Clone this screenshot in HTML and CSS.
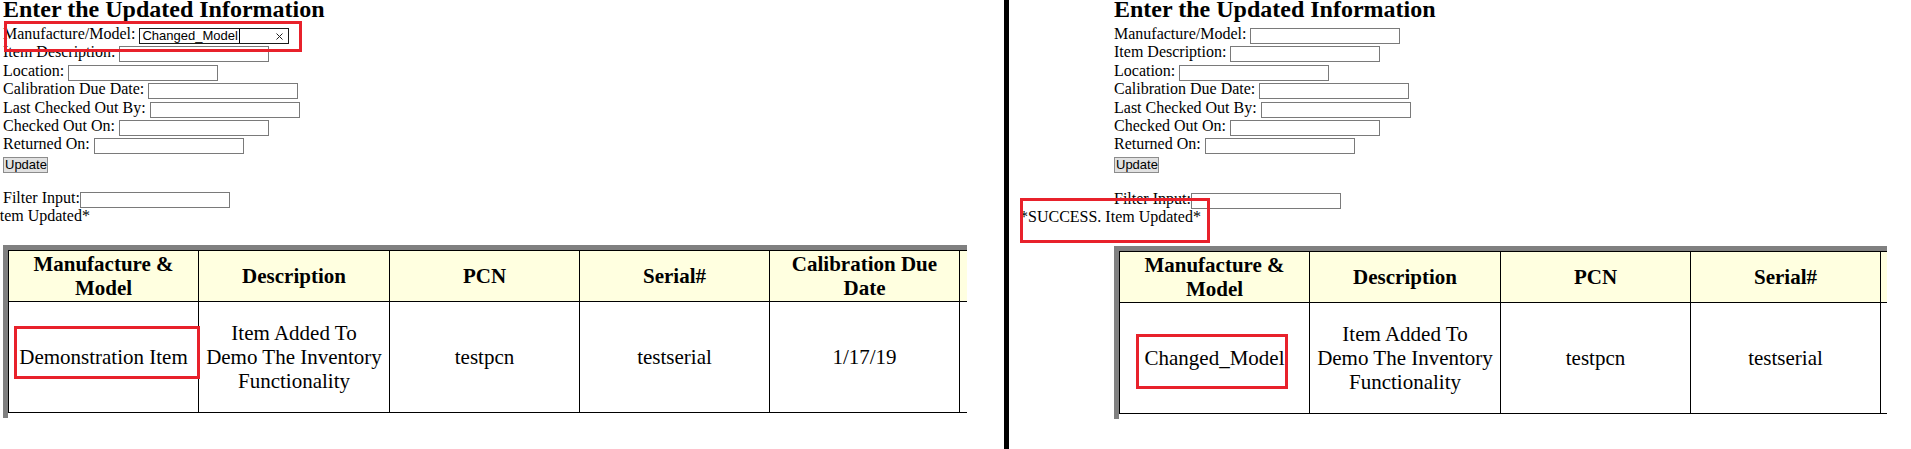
FILE: index.html
```html
<!DOCTYPE html>
<html lang="en">
<head>
<meta charset="utf-8">
<title>Inventory update – before and after</title>
<link rel="stylesheet" href="styles.css">
</head>
<body>
<div class="screen">
  <section class="panel panel-before">
    <div class="page">
      <div class="form-area">
        <h2 class="title">Enter the Updated Information</h2>
        <div class="field">Manufacture/Model: <span class="input-box is-focused"><span class="typed">Changed_Model</span><span class="caret"></span><svg class="clear" width="7" height="7" viewBox="0 0 7 7"><path d="M0.5 0.5L6.5 6.5M6.5 0.5L0.5 6.5" stroke="#222" stroke-width="1"/></svg></span></div>
        <div class="field">Item Description: <input class="text-input" type="text"></div>
        <div class="field">Location: <input class="text-input" type="text"></div>
        <div class="field">Calibration Due Date: <input class="text-input" type="text"></div>
        <div class="field">Last Checked Out By: <input class="text-input" type="text"></div>
        <div class="field">Checked Out On: <input class="text-input" type="text"></div>
        <div class="field">Returned On: <input class="text-input" type="text"></div>
        <div class="btn-row"><button class="btn" type="button">Update</button></div>
        <div class="blank"></div>
        <div class="field">Filter Input:<input class="text-input" type="text"></div>
      </div>
      <div class="message">*SUCCESS. Item Updated*</div>
      <div class="form-area table-area">
        <div class="grid-frame">
          <table class="grid">
            <thead>
              <tr>
                <th class="c1">Manufacture &amp; Model</th>
                <th class="c2">Description</th>
                <th class="cn">PCN</th>
                <th class="cn">Serial#</th>
                <th class="cn">Calibration Due Date</th>
                <th class="cn">Location</th>
              </tr>
            </thead>
            <tbody>
              <tr>
                <td>Demonstration Item</td>
                <td>Item Added To Demo The Inventory Functionality</td>
                <td>testpcn</td>
                <td>testserial</td>
                <td>1/17/19</td>
                <td></td>
              </tr>
            </tbody>
          </table>
        </div>
      </div>
    </div>
  </section>

  <div class="divider"></div>

  <section class="panel panel-after">
    <div class="page">
      <div class="form-area">
        <h2 class="title">Enter the Updated Information</h2>
        <div class="field">Manufacture/Model: <input class="text-input" type="text"></div>
        <div class="field">Item Description: <input class="text-input" type="text"></div>
        <div class="field">Location: <input class="text-input" type="text"></div>
        <div class="field">Calibration Due Date: <input class="text-input" type="text"></div>
        <div class="field">Last Checked Out By: <input class="text-input" type="text"></div>
        <div class="field">Checked Out On: <input class="text-input" type="text"></div>
        <div class="field">Returned On: <input class="text-input" type="text"></div>
        <div class="btn-row"><button class="btn" type="button">Update</button></div>
        <div class="blank blank-tall"></div>
        <div class="field">Filter Input:<input class="text-input" type="text"></div>
      </div>
      <div class="message">*SUCCESS. Item Updated*</div>
      <div class="form-area table-area">
        <div class="grid-frame">
          <table class="grid">
            <thead>
              <tr>
                <th class="c1">Manufacture &amp; Model</th>
                <th class="c2">Description</th>
                <th class="cn">PCN</th>
                <th class="cn">Serial#</th>
                <th class="cn">Calibration Due Date</th>
                <th class="cn">Location</th>
              </tr>
            </thead>
            <tbody>
              <tr>
                <td>Changed_Model</td>
                <td>Item Added To Demo The Inventory Functionality</td>
                <td>testpcn</td>
                <td>testserial</td>
                <td>1/17/19</td>
                <td></td>
              </tr>
            </tbody>
          </table>
        </div>
      </div>
    </div>
  </section>

  <div class="mark mark-input"></div>
  <div class="mark mark-old-cell"></div>
  <div class="mark mark-message"></div>
  <div class="mark mark-new-cell"></div>
</div>
</body>
</html>
```

FILE: styles.css
```css
* {
  box-sizing: border-box;
}

html, body {
  margin: 0;
  padding: 0;
  background: #ffffff;
}

body {
  width: 1911px;
  height: 449px;
  overflow: hidden;
  font-family: "Liberation Serif", "Times New Roman", serif;
  font-size: 16px;
  color: #000000;
}

.screen {
  position: relative;
  display: flex;
  width: 1911px;
  height: 449px;
  overflow: hidden;
}

.panel {
  height: 449px;
  overflow: hidden;
  flex: 0 0 auto;
}

.panel-before {
  width: 967px;
}

.panel-after {
  width: 878px;
}

.divider {
  flex: 0 0 5px;
  width: 5px;
  height: 449px;
  margin-left: 37px;
  background: #000000;
}

.page {
  width: 1400px;
}

.panel-before .page {
  margin-left: -91px;
}

.panel-after .page {
  margin-left: 11px;
}

.form-area {
  padding-left: 94px;
}

.title {
  margin: 0 0 7px 0;
  height: 18px;
  font-size: 24px;
  line-height: 18px;
  font-weight: bold;
  white-space: nowrap;
}

.field {
  height: 18.4px;
  line-height: 18.4px;
  white-space: nowrap;
}

.text-input {
  display: inline-block;
  vertical-align: top;
  width: 150px;
  height: 16px;
  margin: 3px 0 0 0;
  padding: 0;
  border: 1px solid #7a7a7a;
  border-radius: 0;
  background: #ffffff;
  font-family: "Liberation Sans", Arial, sans-serif;
  font-size: 13px;
  outline: none;
}

.input-box {
  display: inline-flex;
  align-items: center;
  vertical-align: top;
  width: 150px;
  height: 16px;
  margin-top: 3px;
  padding-left: 2px;
  border: 1px solid #1a1a1a;
  background: #ffffff;
  font-family: "Liberation Sans", Arial, sans-serif;
  font-size: 13px;
  line-height: 12px;
}

.typed {
  display: block;
}

.caret {
  align-self: stretch;
  width: 1px;
  margin-left: 1px;
  background: #000000;
}

.clear {
  display: block;
  margin-left: auto;
  margin-right: 5px;
}

.btn-row {
  height: 18.4px;
  padding-top: 3px;
}

.btn {
  display: block;
  height: 16px;
  width: 45px;
  margin: 0;
  padding: 0 1px;
  border: 1px solid #8c8c8c;
  border-radius: 0;
  background: #e1e1e1;
  color: #000000;
  font-family: "Liberation Sans", Arial, sans-serif;
  font-size: 13px;
  line-height: 14px;
  text-align: center;
}

.blank {
  height: 16.4px;
}

.blank-tall {
  height: 17.4px;
}

.message {
  height: 18.4px;
  line-height: 18.4px;
  white-space: nowrap;
}

.table-area {
  margin-top: 19.6px;
}

.grid-frame {
  width: max-content;
  border-top: 5px solid #808080;
  border-left: 5px solid #808080;
  padding-bottom: 5px;
}

.grid {
  table-layout: fixed;
  width: 1142px;
  border-collapse: separate;
  border-spacing: 0;
  font-family: "Liberation Serif", "Times New Roman", serif;
  font-size: 21px;
  line-height: 24px;
}

.grid th,
.grid td {
  border-right: 1px solid #000000;
  border-bottom: 1px solid #000000;
  text-align: center;
  vertical-align: middle;
}

.grid th {
  padding: 1px 4px;
  border-top: 1px solid #000000;
  background: #ffffe0;
  font-weight: bold;
}

.grid td {
  padding: 19px 5px;
}

.grid th:first-child,
.grid td:first-child {
  border-left: 1px solid #000000;
}

.grid .c1 {
  width: 191px;
}

.grid .c2 {
  width: 191px;
}

.grid .cn {
  width: 190px;
}

.mark {
  position: absolute;
  border: 3px solid #e8212b;
}

.mark-input {
  left: 4px;
  top: 21px;
  width: 298px;
  height: 31px;
}

.mark-old-cell {
  left: 14px;
  top: 326px;
  width: 186px;
  height: 53px;
}

.mark-message {
  left: 1020px;
  top: 198px;
  width: 190px;
  height: 45px;
}

.mark-new-cell {
  left: 1136px;
  top: 334px;
  width: 152px;
  height: 55px;
}
```
